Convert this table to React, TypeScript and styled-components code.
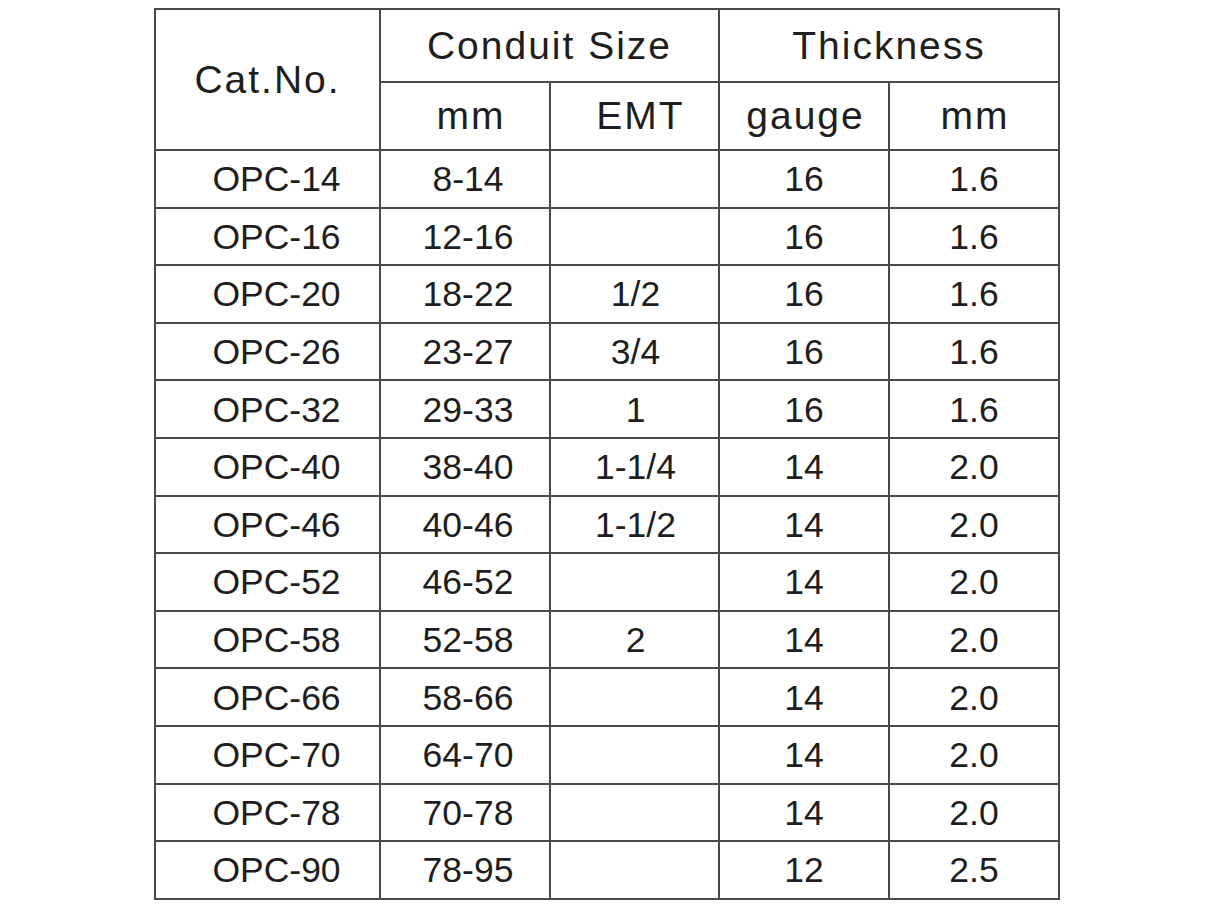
import React from 'react'
import styled, { createGlobalStyle } from 'styled-components'

const GlobalStyle = createGlobalStyle`
    html, body {
        margin: 0;
        padding: 0;
        background: #ffffff;
    }

    body {
        font-family: 'Liberation Sans', Arial, sans-serif;
        color: #222222;
    }
`

const Page = styled.div`
    width: 1220px;
    height: 917px;
    padding: 8px 0 0 154px;
    box-sizing: border-box;
`

const SpecTable = styled.table`
    border-collapse: collapse;
    table-layout: fixed;
    width: 904px;
    border: 2px solid #4a4a4a;
`

// header cells; $indent nudges the label right within its cell
const HeadCell = styled.th<{ $h?: number; $indent?: number }>`
    border: 2px solid #4a4a4a;
    font-weight: 400;
    font-size: 39px;
    letter-spacing: 2px;
    height: ${(p) => p.$h ?? 66}px;
    padding: 0 0 0 ${(p) => p.$indent ?? 0}px;
    text-align: center;
    vertical-align: middle;
    color: #1e1e1e;
`

const Cell = styled.td<{ $indent?: number }>`
    border: 2px solid #4a4a4a;
    font-size: 35.5px;
    height: 53.6px;
    padding: 2px 0 0 ${(p) => p.$indent ?? 0}px;
    text-align: center;
    vertical-align: middle;
    color: #1e1e1e;
`

type Row = [string, string, string, string, string]

const rows: Row[] = [
    ['OPC-14', '8-14', '', '16', '1.6'],
    ['OPC-16', '12-16', '', '16', '1.6'],
    ['OPC-20', '18-22', '1/2', '16', '1.6'],
    ['OPC-26', '23-27', '3/4', '16', '1.6'],
    ['OPC-32', '29-33', '1', '16', '1.6'],
    ['OPC-40', '38-40', '1-1/4', '14', '2.0'],
    ['OPC-46', '40-46', '1-1/2', '14', '2.0'],
    ['OPC-52', '46-52', '', '14', '2.0'],
    ['OPC-58', '52-58', '2', '14', '2.0'],
    ['OPC-66', '58-66', '', '14', '2.0'],
    ['OPC-70', '64-70', '', '14', '2.0'],
    ['OPC-78', '70-78', '', '14', '2.0'],
    ['OPC-90', '78-95', '', '12', '2.5'],
]

export default function App() {
    return (
        <Page>
            <GlobalStyle />
            <SpecTable>
                <colgroup>
                    <col style={{ width: 225 }} />
                    <col style={{ width: 170 }} />
                    <col style={{ width: 169 }} />
                    <col style={{ width: 170 }} />
                    <col style={{ width: 170 }} />
                </colgroup>
                <thead>
                    <tr>
                        <HeadCell rowSpan={2} $h={71}>
                            Cat.No.
                        </HeadCell>
                        <HeadCell colSpan={2} $h={71}>
                            Conduit Size
                        </HeadCell>
                        <HeadCell colSpan={2} $h={71}>
                            Thickness
                        </HeadCell>
                    </tr>
                    <tr>
                        <HeadCell $indent={12}>mm</HeadCell>
                        <HeadCell $indent={12}>EMT</HeadCell>
                        <HeadCell $indent={3}>gauge</HeadCell>
                        <HeadCell $indent={2}>mm</HeadCell>
                    </tr>
                </thead>
                <tbody>
                    {rows.map((r) => (
                        <tr key={r[0]}>
                            <Cell $indent={18}>{r[0]}</Cell>
                            <Cell $indent={6}>{r[1]}</Cell>
                            <Cell $indent={2}>{r[2]}</Cell>
                            <Cell>{r[3]}</Cell>
                            <Cell>{r[4]}</Cell>
                        </tr>
                    ))}
                </tbody>
            </SpecTable>
        </Page>
    )
}
